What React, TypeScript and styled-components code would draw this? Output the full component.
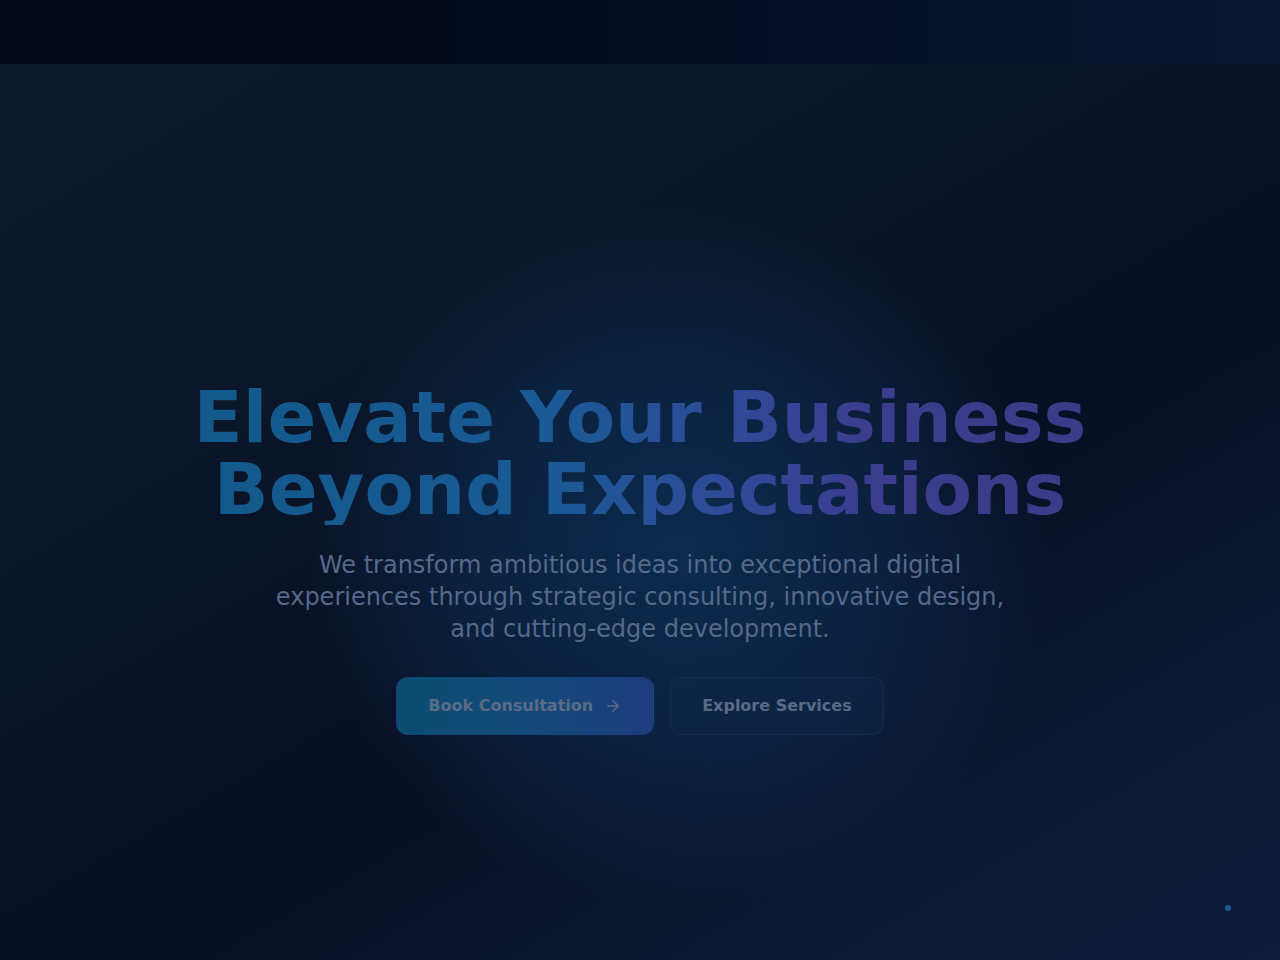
import styled, { createGlobalStyle } from "styled-components";

const GlobalStyle = createGlobalStyle`
  html, body {
    margin: 0;
    padding: 0;
    background: #0a1426;
  }
  body {
    font-family: "DejaVu Sans", "Liberation Sans", sans-serif;
  }
  * {
    box-sizing: border-box;
  }
`;

const Page = styled.div`
  position: relative;
  min-height: 960px;
  display: flex;
  flex-direction: column;
  background:
    radial-gradient(ellipse 370px 350px at 53% 58%, rgba(12, 48, 86, 0.85) 0, rgba(12, 44, 80, 0.55) 60%, rgba(10, 30, 60, 0) 100%),
    linear-gradient(150deg, #0b1a2e 0%, #0a1528 35%, #080f23 60%, #0c1935 85%, #0e1d3b 100%);
  overflow: hidden;
`;

const TopBar = styled.header`
  height: 64px;
  flex-shrink: 0;
  background: linear-gradient(90deg, #030817 0%, #040a1c 30%, #071029 70%, #0b1530 100%);
`;

const Hero = styled.section`
  flex: 1;
  display: flex;
  flex-direction: column;
  align-items: center;
  padding-top: 317px;
  text-align: center;
`;

const Title = styled.h1`
  margin: 0 0 24px;
  font-size: 72px;
  line-height: 72px;
  font-weight: 700;
  background: linear-gradient(90deg, #12598a 0%, #1a5a96 40%, #2f4a98 60%, #3b3d8e 75%, #3d3a88 100%);
  -webkit-background-clip: text;
  background-clip: text;
  color: transparent;
`;

const Lead = styled.p`
  margin: 0 0 32px;
  max-width: 768px;
  font-size: 24px;
  line-height: 32px;
  color: #56698a;
`;

const Actions = styled.div`
  display: flex;
  gap: 16px;
`;

const Button = styled.button<{ $primary?: boolean }>`
  display: inline-flex;
  align-items: center;
  gap: 11px;
  height: 58px;
  padding: 0 31px 1px;
  border-radius: 12px;
  font-family: inherit;
  font-size: 16px;
  font-weight: 700;
  color: #5a6b85;
  cursor: pointer;
  border: 1px solid ${(p) => (p.$primary ? "transparent" : "rgba(40, 70, 110, 0.3)")};
  background: ${(p) =>
    p.$primary
      ? "linear-gradient(90deg, #0b4c70 0%, #134a7a 50%, #1e3c7e 100%)"
      : "rgba(16, 40, 72, 0.4)"};
`;

const Dot = styled.span`
  position: absolute;
  left: 1225px;
  top: 905px;
  width: 6px;
  height: 6px;
  border-radius: 50%;
  background: #1d5a8e;
`;

const Arrow = () => (
  <svg width="18" height="18" viewBox="0 0 24 24" fill="none" stroke="currentColor" strokeWidth="2" strokeLinecap="round" strokeLinejoin="round">
    <path d="M5 12h14" />
    <path d="m12 5 7 7-7 7" />
  </svg>
);

export default function App() {
  return (
    <>
      <GlobalStyle />
      <Page>
        <TopBar />
        <Hero>
          <Title>
            Elevate Your Business
            <br />
            Beyond Expectations
          </Title>
          <Lead>
            We transform ambitious ideas into exceptional digital experiences through strategic consulting,
            innovative design, and cutting-edge development.
          </Lead>
          <Actions>
            <Button $primary>
              Book Consultation
              <Arrow />
            </Button>
            <Button>Explore Services</Button>
          </Actions>
        </Hero>
        <Dot />
      </Page>
    </>
  );
}
